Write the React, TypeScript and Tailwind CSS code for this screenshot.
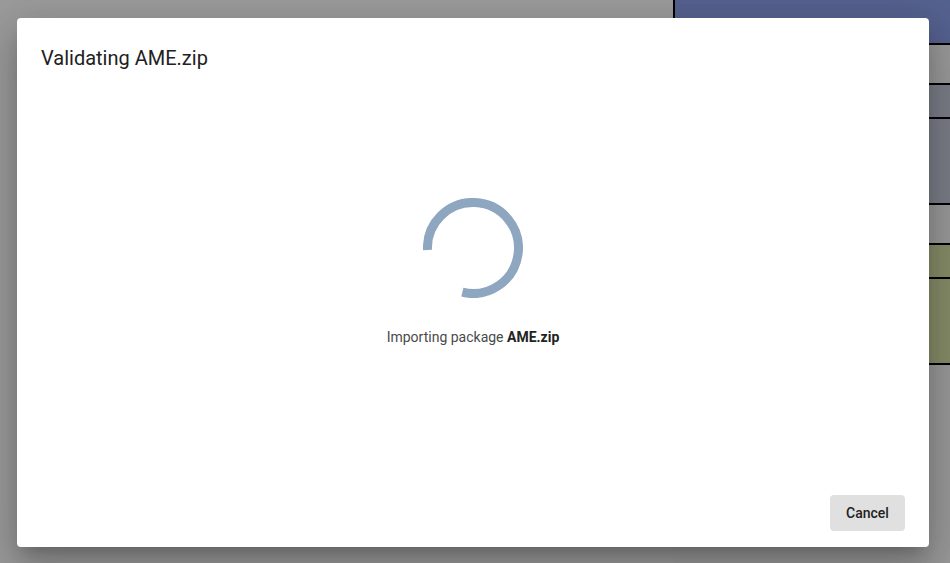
import React from "react";

function Spinner() {
  const cx = 50, cy = 50, r = 45.5;
  const a0 = (180 * Math.PI) / 180;
  const a1 = (103.5 * Math.PI) / 180;
  const x0 = cx + r * Math.cos(a0), y0 = cy + r * Math.sin(a0);
  const x1 = cx + r * Math.cos(a1), y1 = cy + r * Math.sin(a1);
  return (
    <svg width="100" height="100" viewBox="0 0 100 100" className="block">
      <path
        d={`M ${x0} ${y0 + 2} A ${r} ${r} 0 1 1 ${x1} ${y1}`}
        fill="none"
        stroke="#8ea6c0"
        strokeWidth="9"
      />
    </svg>
  );
}

export default function App() {
  return (
    <div className="relative w-[950px] h-[563px] overflow-hidden bg-[#9b9b9b]" style={{ fontFamily: "Roboto, 'Liberation Sans', sans-serif" }}>
      <div className="absolute left-[673px] top-0 right-0 bottom-0 flex flex-col">
        <div className="h-[45px] bg-[#55618f] border-b-2 border-l-2 border-black" />
        <div className="h-[40px] bg-[#999999] border-b-2 border-l-2 border-black" />
        <div className="h-[34px] bg-[#7a7d87] border-b-2 border-l-2 border-black" />
        <div className="h-[86px] bg-[#7a7d87] border-b-2 border-l-2 border-black" />
        <div className="h-[40px] bg-[#999999] border-b-2 border-l-2 border-black" />
        <div className="h-[34px] bg-[#868c68] border-b-2 border-l-2 border-black" />
        <div className="h-[86px] bg-[#868c68] border-b-2 border-l-2 border-black" />
        <div className="flex-1 bg-[#999999]" />
      </div>
      <div className="absolute left-[17px] top-[18px] w-[912px] h-[529px] bg-white rounded flex flex-col shadow-[0_11px_15px_-7px_rgba(0,0,0,0.2),0_24px_38px_3px_rgba(0,0,0,0.14),0_9px_46px_8px_rgba(0,0,0,0.12)]">
        <div className="px-6 pt-[26px] text-[20px] leading-[28px] font-normal text-[#212121]">Validating AME.zip</div>
        <div className="flex-1 flex flex-col items-center pt-[126px]">
          <Spinner />
          <div className="mt-[29px] text-[14px] leading-[20px] text-[#4a4a4a]">
            Importing package <span className="font-bold text-[#222]">AME.zip</span>
          </div>
        </div>
        <div className="flex justify-end px-6 pb-4">
          <button className="w-[75px] h-[36px] rounded bg-[#e0e0e0] text-[14px] font-medium text-[#222]">Cancel</button>
        </div>
      </div>
    </div>
  );
}
